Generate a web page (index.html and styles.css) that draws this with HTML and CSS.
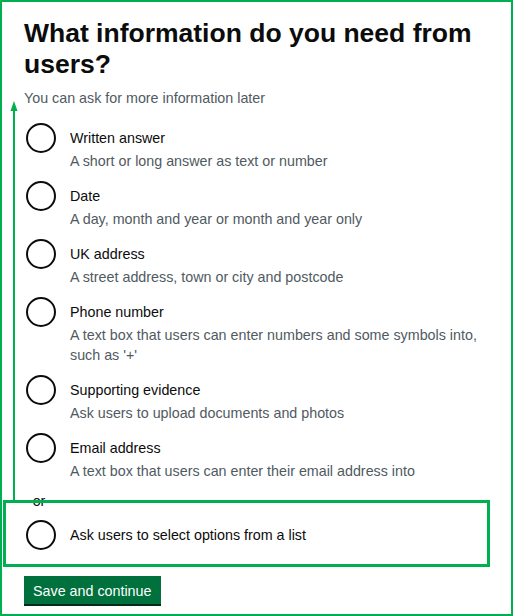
FILE: index.html
```html
<!DOCTYPE html>
<html lang="en">
<head>
<meta charset="utf-8">
<title>What information do you need from users?</title>
<link rel="stylesheet" href="styles.css">
</head>
<body>
<div class="frame">
  <main class="page">
    <h1 class="title">What information do you need from users?</h1>
    <p class="lead">You can ask for more information later</p>
    <div class="radios">
      <div class="item">
        <span class="radio"></span>
        <div class="text">
          <div class="label">Written answer</div>
          <div class="hint">A short or long answer as text or number</div>
        </div>
      </div>
      <div class="item">
        <span class="radio"></span>
        <div class="text">
          <div class="label">Date</div>
          <div class="hint">A day, month and year or month and year only</div>
        </div>
      </div>
      <div class="item">
        <span class="radio"></span>
        <div class="text">
          <div class="label">UK address</div>
          <div class="hint">A street address, town or city and postcode</div>
        </div>
      </div>
      <div class="item">
        <span class="radio"></span>
        <div class="text">
          <div class="label">Phone number</div>
          <div class="hint">A text box that users can enter numbers and some symbols into, such as '+'</div>
        </div>
      </div>
      <div class="item">
        <span class="radio"></span>
        <div class="text">
          <div class="label">Supporting evidence</div>
          <div class="hint">Ask users to upload documents and photos</div>
        </div>
      </div>
      <div class="item">
        <span class="radio"></span>
        <div class="text">
          <div class="label">Email address</div>
          <div class="hint">A text box that users can enter their email address into</div>
        </div>
      </div>
      <div class="divider">or</div>
      <div class="item item-last">
        <span class="radio"></span>
        <div class="text">
          <div class="label">Ask users to select options from a list</div>
        </div>
      </div>
    </div>
    <button class="btn" type="button">Save and continue</button>
  </main>
  <svg class="arrow" width="9" height="400" viewBox="0 0 9 400" aria-hidden="true">
    <polygon points="4,1 0.5,11 7.5,11" fill="#00b050"/>
    <rect x="3" y="9" width="2" height="391" fill="#00b050"/>
  </svg>
  <div class="highlight"></div>
</div>
</body>
</html>
```
FILE: styles.css
```css
html, body {
  margin: 0;
  padding: 0;
  background: #ffffff;
}

body {
  font-family: "Liberation Sans", Arial, sans-serif;
  color: #0b0c0c;
}

.frame {
  position: relative;
  box-sizing: border-box;
  width: 513px;
  height: 616px;
  border: 2px solid #00b050;
  overflow: hidden;
}

.page {
  padding: 16px 22px 0 22px;
}

.title {
  margin: 0;
  font-size: 26.5px;
  line-height: 31px;
  font-weight: 700;
  color: #0b0c0c;
}

.lead {
  margin: 8px 0 0 0;
  font-size: 14.3px;
  line-height: 20px;
  color: #505a5f;
}

.radios {
  margin-top: 15px;
  display: flex;
  flex-direction: column;
}

.item {
  display: flex;
  align-items: flex-start;
  gap: 14px;
  margin-bottom: 10px;
}

.item-last {
  margin-bottom: 26px;
}

.radio {
  flex: none;
  box-sizing: border-box;
  width: 30px;
  height: 30px;
  margin-left: 2px;
  border: 2px solid #0b0c0c;
  border-radius: 50%;
  background: #ffffff;
}

.text {
  padding-top: 5px;
  width: 420px;
}

.label {
  font-size: 14.3px;
  line-height: 20px;
  color: #0b0c0c;
}

.hint {
  margin-top: 3px;
  font-size: 14.3px;
  line-height: 20px;
  color: #505a5f;
}

.divider {
  width: 30px;
  text-align: center;
  font-size: 14.3px;
  line-height: 20px;
  color: #0b0c0c;
  margin-bottom: 9px;
}

.btn {
  display: inline-block;
  margin: 0;
  border: 0;
  border-radius: 0;
  padding: 5px 10px 3px 9px;
  background: #00703c;
  color: #ffffff;
  font-family: "Liberation Sans", Arial, sans-serif;
  font-size: 14.3px;
  line-height: 20px;
  box-shadow: 0 2px 0 #002d18;
  cursor: pointer;
}

.arrow {
  position: absolute;
  left: 8px;
  top: 98px;
}

.highlight {
  position: absolute;
  left: 1px;
  top: 498px;
  width: 487px;
  height: 67px;
  box-sizing: border-box;
  border: 3px solid #00b050;
}
```
